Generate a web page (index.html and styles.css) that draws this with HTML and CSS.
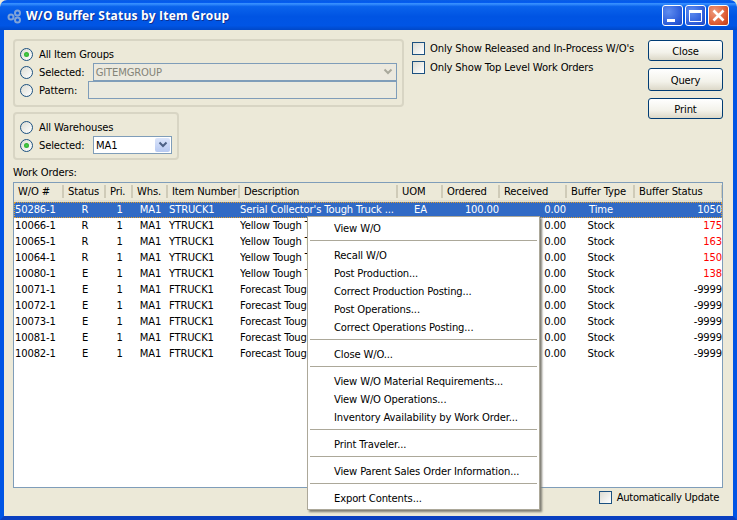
FILE: index.html
```html
<!DOCTYPE html>
<html lang="en">
<head>
<meta charset="utf-8">
<title>W/O Buffer Status by Item Group</title>
<link rel="stylesheet" href="styles.css">
</head>
<body>
<div class="window">
  <header class="titlebar">
    <svg class="app-icon" width="16" height="16" viewBox="0 0 16 16"><g fill="none" stroke="#7fa3d8" stroke-width="2"><circle cx="5" cy="9" r="2.5"/><circle cx="11.5" cy="5" r="2.5"/><circle cx="11.5" cy="12" r="2.5"/></g></svg>
    <h1 class="title">W/O Buffer Status by Item Group</h1>
    <div class="controls">
      <span class="ctl ctl-blue"><svg width="21" height="21" viewBox="0 0 21 21"><rect x="5" y="14" width="8" height="3" fill="#fff"/></svg></span>
      <span class="ctl ctl-blue"><svg width="21" height="21" viewBox="0 0 21 21"><path d="M4.500 5.500h12v11h-12z" fill="none" stroke="#fff"/><rect x="4" y="5" width="13" height="3" fill="#fff"/></svg></span>
      <span class="ctl ctl-red"><svg width="21" height="21" viewBox="0 0 21 21"><path d="M5.500 5.500l10 10m0-10l-10 10" stroke="#fff" stroke-width="2.600" fill="none"/></svg></span>
    </div>
  </header>
  <main class="content">
    <section class="top">
      <div class="filters">
        <div class="group group-items">
          <div class="row"><span class="radio on"></span><span class="lbl">All Item Groups</span></div>
          <div class="row"><span class="radio"></span><span class="lbl lbl-sel">Selected:</span><span class="combo combo-dis"><span class="combo-text">GITEMGROUP</span><span class="combo-btn dis"><svg width="10" height="8" viewBox="0 0 10 8"><path d="M1.500 1.500L5 5l3.500-3.500" fill="none" stroke="#a9a99c" stroke-width="2"/></svg></span></span></div>
          <div class="row"><span class="radio"></span><span class="lbl lbl-pat">Pattern:</span><span class="input-dis"></span></div>
        </div>
        <div class="group group-wh">
          <div class="row"><span class="radio"></span><span class="lbl">All Warehouses</span></div>
          <div class="row"><span class="radio on"></span><span class="lbl lbl-sel">Selected:</span><span class="combo combo-wh"><span class="combo-text">MA1</span><span class="combo-btn"><svg width="10" height="8" viewBox="0 0 10 8"><path d="M1.500 1.500L5 5l3.500-3.500" fill="none" stroke="#4d6185" stroke-width="2"/></svg></span></span></div>
        </div>
      </div>
      <div class="checks">
        <label class="check-row"><span class="check"></span><span>Only Show Released and In-Process W/O's</span></label>
        <label class="check-row"><span class="check"></span><span>Only Show Top Level Work Orders</span></label>
      </div>
      <div class="buttons">
        <button class="btn">Close</button>
        <button class="btn btn-tall">Query</button>
        <button class="btn">Print</button>
      </div>
    </section>
    <div class="list-label">Work Orders:</div>
    <section class="list">
      <div class="grid head">
        <span>W/O #</span><span>Status</span><span>Pri.</span><span>Whs.</span><span>Item Number</span><span>Description</span><span>UOM</span><span>Ordered</span><span>Received</span><span>Buffer Type</span><span>Buffer Status</span>
      </div>
      <div class="grid data selected"><span>50286-1</span><span class="c">R</span><span class="c">1</span><span class="c">MA1</span><span>STRUCK1</span><span>Serial Collector's Tough Truck ...</span><span class="c">EA</span><span class="r">100.00</span><span class="r">0.00</span><span class="c">Time</span><span class="r">1050</span></div>
      <div class="grid data"><span>10066-1</span><span class="c">R</span><span class="c">1</span><span class="c">MA1</span><span>YTRUCK1</span><span>Yellow Tough Truck</span><span></span><span></span><span class="r">0.00</span><span class="c">Stock</span><span class="r red">175</span></div>
      <div class="grid data"><span>10065-1</span><span class="c">R</span><span class="c">1</span><span class="c">MA1</span><span>YTRUCK1</span><span>Yellow Tough Truck</span><span></span><span></span><span class="r">0.00</span><span class="c">Stock</span><span class="r red">163</span></div>
      <div class="grid data"><span>10064-1</span><span class="c">R</span><span class="c">1</span><span class="c">MA1</span><span>YTRUCK1</span><span>Yellow Tough Truck</span><span></span><span></span><span class="r">0.00</span><span class="c">Stock</span><span class="r red">150</span></div>
      <div class="grid data"><span>10080-1</span><span class="c">E</span><span class="c">1</span><span class="c">MA1</span><span>YTRUCK1</span><span>Yellow Tough Truck</span><span></span><span></span><span class="r">0.00</span><span class="c">Stock</span><span class="r red">138</span></div>
      <div class="grid data"><span>10071-1</span><span class="c">E</span><span class="c">1</span><span class="c">MA1</span><span>FTRUCK1</span><span>Forecast Tough Truck</span><span></span><span></span><span class="r">0.00</span><span class="c">Stock</span><span class="r">-9999</span></div>
      <div class="grid data"><span>10072-1</span><span class="c">E</span><span class="c">1</span><span class="c">MA1</span><span>FTRUCK1</span><span>Forecast Tough Truck</span><span></span><span></span><span class="r">0.00</span><span class="c">Stock</span><span class="r">-9999</span></div>
      <div class="grid data"><span>10073-1</span><span class="c">E</span><span class="c">1</span><span class="c">MA1</span><span>FTRUCK1</span><span>Forecast Tough Truck</span><span></span><span></span><span class="r">0.00</span><span class="c">Stock</span><span class="r">-9999</span></div>
      <div class="grid data"><span>10081-1</span><span class="c">E</span><span class="c">1</span><span class="c">MA1</span><span>FTRUCK1</span><span>Forecast Tough Truck</span><span></span><span></span><span class="r">0.00</span><span class="c">Stock</span><span class="r">-9999</span></div>
      <div class="grid data"><span>10082-1</span><span class="c">E</span><span class="c">1</span><span class="c">MA1</span><span>FTRUCK1</span><span>Forecast Tough Truck</span><span></span><span></span><span class="r">0.00</span><span class="c">Stock</span><span class="r">-9999</span></div>
    </section>
    <footer class="bottom">
      <label class="check-row"><span class="check"></span><span>Automatically Update</span></label>
    </footer>
  </main>
  <nav class="menu">
    <div class="mi">View W/O</div>
    <hr class="sep">
    <div class="mi">Recall W/O</div>
    <div class="mi">Post Production...</div>
    <div class="mi">Correct Production Posting...</div>
    <div class="mi">Post Operations...</div>
    <div class="mi">Correct Operations Posting...</div>
    <hr class="sep">
    <div class="mi">Close W/O...</div>
    <hr class="sep">
    <div class="mi">View W/O Material Requirements...</div>
    <div class="mi">View W/O Operations...</div>
    <div class="mi">Inventory Availability by Work Order...</div>
    <hr class="sep">
    <div class="mi">Print Traveler...</div>
    <hr class="sep">
    <div class="mi">View Parent Sales Order Information...</div>
    <hr class="sep">
    <div class="mi">Export Contents...</div>
  </nav>
</div>
</body>
</html>
```
FILE: styles.css
```css
* { box-sizing: border-box; }
html, body { margin: 0; padding: 0; }
body {
  width: 737px; height: 520px; overflow: hidden;
  font-family: "DejaVu Sans", Verdana, sans-serif;
  font-size: 10px; letter-spacing: -0.15px; color: #000; background: #ece9d8;
}
.window {
  position: relative; width: 737px; height: 520px;
  display: flex; flex-direction: column;
  background: #ece9d8;
}
.titlebar {
  height: 30px; flex: none;
  display: flex; align-items: center; padding: 1px 8px 0 6px;
  border-radius: 7px 7px 0 0;
  background: linear-gradient(#0a5fe6 0, #0058ee 8%, #3a93ff 12%, #0a63ec 22%, #0054e3 55%, #0055e5 85%, #0048c8 100%);
}
.app-icon { flex: none; }
.title {
  margin: 0 0 0 4px; flex: 1;
  font-family: "Open Sans", sans-serif; font-size: 12px; font-weight: 700; color: #fff;
  text-shadow: 1px 1px 0 #0f2f8f; letter-spacing: .2px;
}
.controls { display: flex; gap: 2px; }
.ctl { width: 21px; height: 21px; display: block; border: 1px solid #fff; border-radius: 3px; overflow: hidden; }
.ctl svg { display: block; margin: -1px; }
.ctl-blue { background: radial-gradient(circle at 30% 30%, #5f8df0, #2a5ad8 70%, #1c47c0); }
.ctl-red { background: radial-gradient(circle at 30% 30%, #ee9a7c, #dc5a32 65%, #c03a12); }
.content {
  flex: 1; display: flex; flex-direction: column; min-height: 0;
  border: solid #0055e5; border-width: 0 4px 4px;
  border-bottom-color: #0a3fc0;
  padding: 9px 10px 0 9px;
}
.top { display: flex; height: 121px; flex: none; }
.filters { width: 391px; flex: none; display: flex; flex-direction: column; gap: 5px; }
.group { border: 2px solid #d8d5c4; border-radius: 4px; padding: 4px 5px; display: flex; flex-direction: column; }
.group-items { height: 68px; gap: 0; }
.group-wh { width: 166px; height: 48px; padding-top: 4px; }
.row { display: flex; align-items: center; height: 18px; flex: none; }
.radio {
  width: 13px; height: 13px; flex: none; border-radius: 50%;
  border: 1px solid #1c5180; background: linear-gradient(135deg, #dcdcd3, #fff);
  position: relative; margin-right: 6px;
}
.radio.on::after {
  content: ""; position: absolute; left: 3px; top: 3px; width: 5px; height: 5px;
  border-radius: 50%; background: radial-gradient(circle, #4bd04b, #21a121);
}
.lbl { white-space: nowrap; }
.lbl-sel { width: 54px; }
.lbl-pat { width: 49px; }
.combo {
  display: flex; align-items: center; height: 18px; border: 1px solid #7f9db9; background: #fff;
  padding: 0 1px 0 2px;
}
.combo-dis { width: 306px; background: #ebe9de; color: #848478; }
.combo-wh { width: 79px; }
.combo-text { flex: 1; }
.combo-btn {
  width: 15px; height: 14px; display: flex; align-items: center; justify-content: center;
  background: linear-gradient(#dbe5fb, #b7c9f1); border-radius: 2px;
}
.combo-btn.dis { background: #ece9de; }
.input-dis { width: 311px; height: 18px; border: 1px solid #7f9db9; background: #ebeadf; }
.checks { margin: 3px 0 0 8px; width: 228px; display: flex; flex-direction: column; gap: 6px; flex: none; }
.check-row { display: flex; align-items: center; gap: 5px; height: 13px; white-space: nowrap; }
.check { width: 13px; height: 13px; flex: none; border: 1px solid #1c5180; background: linear-gradient(135deg, #dcdcd3, #fff); }
.buttons { margin-left: auto; margin-top: 1px; width: 75px; display: flex; flex-direction: column; gap: 7px; }
.btn {
  width: 75px; height: 21px; padding: 1px 0 0; font: inherit; letter-spacing: inherit; color: #000; border: 1px solid #003c74; border-radius: 3px;
  background: linear-gradient(#fff, #f3f2ea 60%, #dcd8c8);
}
.btn-tall { height: 23px; }
.list-label { height: 13px; line-height: 13px; flex: none; margin-top: 6px; }
.list {
  flex: none; height: 306px; margin-top: 3px; background: #fff; border: 1px solid #7f9db9; overflow: hidden;
}
.grid { display: grid; grid-template-columns: 50px 42px 27px 35px 72px 158px 45px 57px 67px 68px 88px; }
.grid > span { white-space: nowrap; overflow: hidden; }
.head { height: 19px; background: #ece9d8; border-bottom: 2px solid #e2dfcf; }
.head > span { padding-left: 4px; border-right: 2px solid #cfcbb8; height: 13px; margin-top: 2px; line-height: 13px; }
.data { height: 16px; line-height: 16px; }
.data > span { padding: 0 1px; }
.data > span:nth-child(6) { padding-left: 0; }
.c { text-align: center; }
.r { text-align: right; }
.red { color: #f00; }
.selected { background: #316ac5; color: #fff; outline: 1px dotted #e3a030; outline-offset: -1px; }
.bottom { flex: 1; display: flex; justify-content: flex-end; padding: 3px 4px 0 0; letter-spacing: -0.3px; }
.menu {
  position: absolute; left: 307px; top: 216px; width: 233px; height: 294px;
  background: #fff; border: 1px solid #aca899; box-shadow: 2px 2px 2px #807e74; padding: 2px;
}
.mi { height: 18px; line-height: 18px; padding: 1px 0 0 24px; white-space: nowrap; }
.sep { height: 1px; border: 0; background: #aca899; margin: 3px 0 5px; }
```
